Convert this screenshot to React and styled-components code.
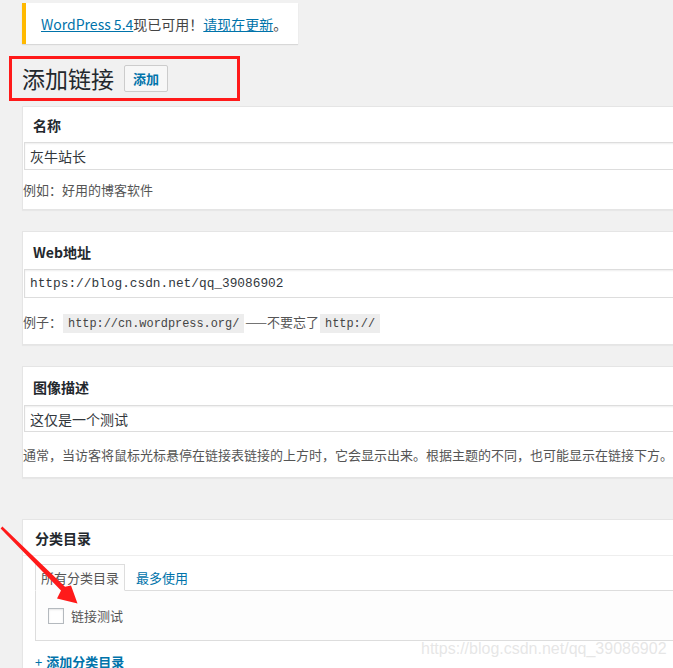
import React from 'react';
import styled, { createGlobalStyle } from 'styled-components';

const GlobalStyle = createGlobalStyle`
  html, body {
    margin: 0;
    padding: 0;
    background: #f1f1f1;
    overflow: hidden;
  }
  body {
    font-family: "Noto Sans CJK SC", "Noto Sans", sans-serif;
    color: #444;
    font-size: 13px;
  }
`;

const Page = styled.div`
  position: relative;
  width: 673px;
  height: 668px;
  overflow: hidden;
`;

const Wrap = styled.div`
  padding: 3px 0 0 22px;
  width: 900px;
`;

const Notice = styled.div`
  width: 276px;
  height: 41px;
  box-sizing: border-box;
  background: #fff;
  border-left: 4px solid #ffb900;
  box-shadow: 0 1px 1px rgba(0, 0, 0, 0.1);
  display: flex;
  align-items: center;
  padding-left: 15px;
  font-size: 14px;
  color: #444;
  white-space: nowrap;
`;

const Link = styled.a`
  color: #0073aa;
  text-decoration: underline;
`;

const Heading = styled.div`
  margin: 12px 0 5px -13px;
  width: 231px;
  height: 45px;
  box-sizing: border-box;
  border: 3px solid #ff1a1a;
  padding-left: 10px;
  display: flex;
  align-items: center;
`;

const Title = styled.h1`
  margin: 0;
  font-size: 23px;
  font-weight: 400;
  color: #23282d;
  line-height: 29px;
`;

const AddButton = styled.button`
  margin-left: 10px;
  height: 27px;
  padding: 0 8px;
  border: 1px solid #ccc;
  border-radius: 2px;
  background: #f7f7f7;
  color: #0073aa;
  font-family: inherit;
  font-size: 13px;
  font-weight: 700;
  line-height: 1;
`;

const Panel = styled.div`
  background: #fff;
  border: 1px solid #e5e5e5;
  box-shadow: 0 1px 1px rgba(0, 0, 0, 0.04);
  padding-bottom: ${p => p.$pb}px;
  margin-bottom: ${p => p.$mb}px;
`;

const Label = styled.h2`
  margin: 0;
  padding: ${p => p.$pt}px 10px ${p => p.$pbot}px;
  font-size: 14px;
  line-height: 20px;
  font-weight: 700;
  color: #23282d;
`;

const Input = styled.div`
  margin-left: 1px;
  height: ${p => p.$h}px;
  box-sizing: border-box;
  border: 1px solid #ddd;
  box-shadow: inset 0 1px 2px rgba(0, 0, 0, 0.07);
  padding-left: 5px;
  display: flex;
  align-items: center;
  font-size: ${p => (p.$mono ? '12.8px' : '14px')};
  font-family: ${p => (p.$mono ? '"Liberation Mono", monospace' : 'inherit')};
  color: #32373c;
`;

const Hint = styled.p`
  margin: ${p => p.$mt}px 0 0;
  line-height: 22px;
  font-size: 13px;
  color: #555;
  white-space: nowrap;
`;

const Code = styled.code`
  background: #ededed;
  padding: 3px 5px 2px;
  margin: 0 1px;
  font-family: "Liberation Mono", monospace;
  font-size: 11.9px;
  color: #444;
`;

const BoxTitle = styled.h2`
  margin: 0;
  padding: 8px 12px 7px;
  font-size: 14px;
  line-height: 20px;
  font-weight: 700;
  color: #23282d;
  border-bottom: 1px solid #eee;
`;

const BoxInside = styled.div`
  padding: 8px 12px 10px;
`;

const Tabs = styled.div`
  display: flex;
  align-items: flex-end;
  position: relative;
  z-index: 1;
`;

const Tab = styled.div`
  height: 27px;
  box-sizing: border-box;
  display: flex;
  align-items: center;
  padding: 0 ${p => (p.$active ? 5 : 0)}px;
  margin-right: 10px;
  margin-bottom: -1px;
  border: 1px solid ${p => (p.$active ? '#ddd' : 'transparent')};
  border-bottom-color: ${p => (p.$active ? '#fdfdfd' : 'transparent')};
  background: ${p => (p.$active ? '#fdfdfd' : 'transparent')};
  color: ${p => (p.$active ? '#555' : '#0073aa')};
  font-size: 13px;
`;

const TabPanel = styled.div`
  height: 51px;
  box-sizing: border-box;
  border: 1px solid #ddd;
  background: #fdfdfd;
  display: flex;
  align-items: center;
  padding: 0 12px;
  gap: 7px;
  font-size: 13px;
  color: #555;
`;

const Checkbox = styled.span`
  width: 16px;
  height: 16px;
  box-sizing: border-box;
  border: 1px solid #b4b9be;
  background: #fff;
  box-shadow: inset 0 1px 2px rgba(0, 0, 0, 0.1);
`;

const AddNew = styled.div`
  margin-top: 11px;
  line-height: 20px;
  color: #0073aa;
  font-size: 13px;
  font-weight: 700;
  span {
    font-weight: 400;
    margin-right: 4px;
  }
`;

const Watermark = styled.div`
  position: absolute;
  left: 421px;
  top: 640px;
  font-family: "Liberation Sans", Arial, sans-serif;
  font-size: 16px;
  color: rgba(205, 205, 205, 0.5);
  white-space: nowrap;
`;

const Overlay = styled.svg`
  position: absolute;
  left: 0;
  top: 0;
  z-index: 5;
  pointer-events: none;
`;

export default function App() {
  return (
    <Page>
      <GlobalStyle />
      <Wrap>
        <Notice>
          <Link>WordPress 5.4</Link>现已可用！<Link>请现在更新</Link>。
        </Notice>

        <Heading>
          <Title>添加链接</Title>
          <AddButton>添加</AddButton>
        </Heading>

        <Panel $pb={8} $mb={21}>
          <Label $pt={8} $pbot={7}>名称</Label>
          <Input $h={28}>灰牛站长</Input>
          <Hint $mt={9}>例如：好用的博客软件</Hint>
        </Panel>

        <Panel $pb={9} $mb={21}>
          <Label $pt={10} $pbot={7}>Web地址</Label>
          <Input $h={29} $mono>https://blog.csdn.net/qq_39086902</Input>
          <Hint $mt={13}>
            例子：<Code>http://cn.wordpress.org/</Code>——不要忘了<Code>http://</Code>
          </Hint>
        </Panel>

        <Panel $pb={11} $mb={41}>
          <Label $pt={10} $pbot={8}>图像描述</Label>
          <Input $h={27}>这仅是一个测试</Input>
          <Hint $mt={12}>
            通常，当访客将鼠标光标悬停在链接表链接的上方时，它会显示出来。根据主题的不同，也可能显示在链接下方。
          </Hint>
        </Panel>

        <Panel $pb={0} $mb={0}>
          <BoxTitle>分类目录</BoxTitle>
          <BoxInside>
            <Tabs>
              <Tab $active>所有分类目录</Tab>
              <Tab>最多使用</Tab>
            </Tabs>
            <TabPanel>
              <Checkbox />
              链接测试
            </TabPanel>
            <AddNew>
              <span>+</span>添加分类目录
            </AddNew>
          </BoxInside>
        </Panel>
      </Wrap>

      <Watermark>https://blog.csdn.net/qq_39086902</Watermark>

      <Overlay width="673" height="668" viewBox="0 0 673 668">
        <polygon
          points="2.4,526.6 65,586.8 71,585.5 77.5,603.5 57,598.5 61,590.6 0.6,528.4"
          fill="#ff1a1a"
        />
      </Overlay>
    </Page>
  );
}
